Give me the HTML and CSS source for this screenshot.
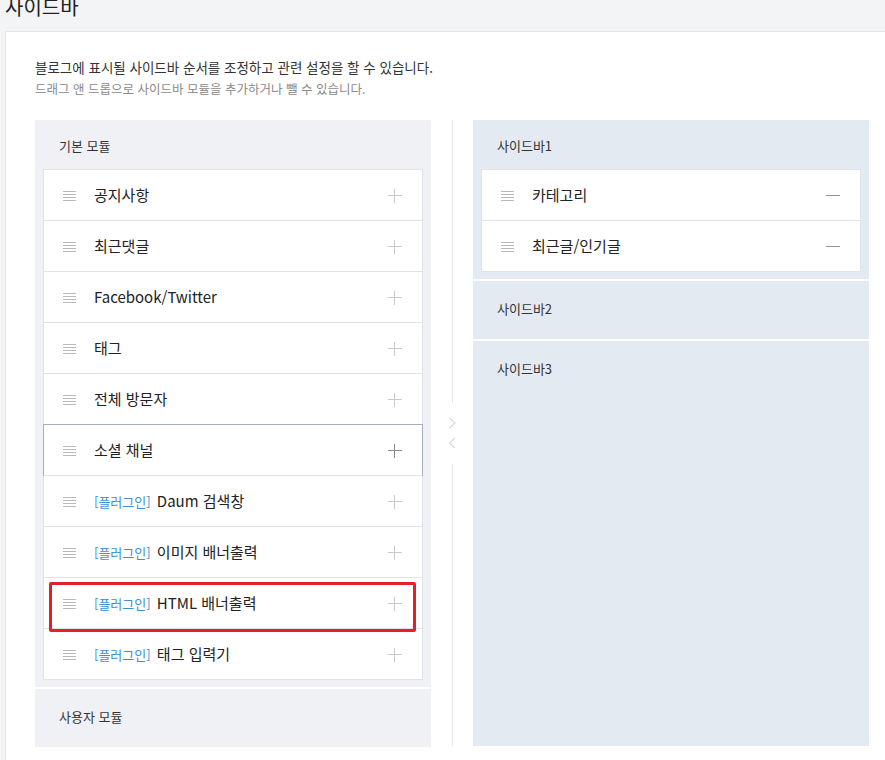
FILE: index.html
```html
<!DOCTYPE html>
<html lang="ko">
<head>
<meta charset="utf-8">
<title>사이드바</title>
<link rel="stylesheet" href="styles.css">
</head>
<body>
<h1 class="page-title">사이드바</h1>
<div class="card">
  <p class="desc">블로그에 표시될 사이드바 순서를 조정하고 관련 설정을 할 수 있습니다.</p>
  <p class="desc-sub">드래그 앤 드롭으로 사이드바 모듈을 추가하거나 뺄 수 있습니다.</p>
  <div class="board">
    <div class="col">
      <section class="panel panel-left">
        <h2 class="panel-head">기본 모듈</h2>
        <ul class="list">
          <li class="item"><span class="drag"></span><span class="name">공지사항</span><span class="plus"></span></li>
          <li class="item"><span class="drag"></span><span class="name">최근댓글</span><span class="plus"></span></li>
          <li class="item"><span class="drag"></span><span class="name">Facebook/Twitter</span><span class="plus"></span></li>
          <li class="item"><span class="drag"></span><span class="name">태그</span><span class="plus"></span></li>
          <li class="item"><span class="drag"></span><span class="name">전체 방문자</span><span class="plus"></span></li>
          <li class="item active"><span class="drag"></span><span class="name">소셜 채널</span><span class="plus"></span></li>
          <li class="item"><span class="drag"></span><span class="name"><span class="tag">[플러그인]</span> Daum 검색창</span><span class="plus"></span></li>
          <li class="item"><span class="drag"></span><span class="name"><span class="tag">[플러그인]</span> 이미지 배너출력</span><span class="plus"></span></li>
          <li class="item marked"><span class="drag"></span><span class="name"><span class="tag">[플러그인]</span> HTML 배너출력</span><span class="plus"></span></li>
          <li class="item"><span class="drag"></span><span class="name"><span class="tag">[플러그인]</span> 태그 입력기</span><span class="plus"></span></li>
        </ul>
      </section>
      <section class="panel panel-left panel-short">
        <h2 class="panel-head">사용자 모듈</h2>
      </section>
    </div>
    <div class="divider">
      <span class="vline"></span>
      <span class="arrows">
        <svg width="9" height="32" viewBox="0 0 9 32"><path d="M1.5 1 L7 6 L1.5 11" fill="none" stroke="#d6d9de" stroke-width="1.2"/><path d="M7 21 L1.5 26 L7 31" fill="none" stroke="#d6d9de" stroke-width="1.2"/></svg>
      </span>
      <span class="vline"></span>
    </div>
    <div class="col">
      <section class="panel panel-right">
        <h2 class="panel-head">사이드바1</h2>
        <ul class="list">
          <li class="item"><span class="drag"></span><span class="name">카테고리</span><span class="minus"></span></li>
          <li class="item"><span class="drag"></span><span class="name">최근글/인기글</span><span class="minus"></span></li>
        </ul>
      </section>
      <section class="panel panel-right panel-short">
        <h2 class="panel-head">사이드바2</h2>
      </section>
      <section class="panel panel-right panel-fill">
        <h2 class="panel-head">사이드바3</h2>
      </section>
    </div>
  </div>
</div>
</body>
</html>
```
FILE: styles.css
```css
html, body {
  margin: 0;
  padding: 0;
  height: 100%;
  overflow: hidden;
}
body {
  background: #f3f4f6;
  font-family: "Noto Sans CJK KR", "Noto Sans", sans-serif;
  color: #222;
}
.page-title {
  margin: -7px 0 0 5px;
  font-size: 20px;
  font-weight: 400;
  line-height: 28px;
  height: 28px;
  color: #222;
}
.card {
  margin: 10px -20px 0 5px;
  background: #fff;
  border: 1px solid #e3e5ea;
  padding: 25px 0 0 29px;
  height: 740px;
}
.desc {
  margin: 0;
  font-size: 13.5px;
  line-height: 20px;
  color: #333;
}
.desc-sub {
  margin: 1px 0 0;
  font-size: 12.5px;
  line-height: 21px;
  color: #8a8a8a;
}
.board {
  display: flex;
  margin-top: 21px;
  align-items: stretch;
  height: 626px;
}
.col {
  width: 396px;
  display: flex;
  flex-direction: column;
  gap: 2px;
}
.divider {
  width: 42px;
  display: flex;
  flex-direction: column;
  align-items: center;
}
.vline {
  flex: 1;
  width: 1px;
  background: #eaebee;
  margin-left: 1px;
}
.arrows {
  height: 61px;
  display: flex;
  align-items: center;
  justify-content: center;
  margin-left: 1px;
}
.arrows svg {
  display: block;
}
.panel {
  padding: 0 8px 7px;
}
.panel-left { background: #eff1f5; }
.panel-right { background: #e4eaf2; }
.panel-short { height: 58px; padding: 0 8px; }
.panel-fill { flex: 1; }
.panel-head {
  margin: 0;
  padding-left: 16px;
  height: 49px;
  line-height: 52px;
  font-size: 13px;
  font-weight: 400;
  color: #333;
}
.panel-short .panel-head {
  height: 58px;
  line-height: 56px;
}
.panel-fill .panel-head {
  line-height: 56px;
  height: 58px;
}
.list {
  list-style: none;
  margin: 0;
  padding: 0;
  background: #fff;
  border: 1px solid #dfe2e8;
  border-top: 0;
}
.item {
  position: relative;
  display: flex;
  align-items: center;
  height: 50px;
  border-top: 1px solid #dfe2e8;
  padding: 0 20px 0 19px;
}
.drag {
  width: 13px;
  height: 10px;
  margin-top: 1px;
  background: repeating-linear-gradient(to bottom, #b9b9b9 0, #b9b9b9 1px, transparent 1px, transparent 3px);
  flex: none;
}
.name {
  flex: 1;
  margin-left: 18px;
  font-size: 15px;
  color: #222;
  line-height: 20px;
}
.tag {
  font-size: 13px;
  color: #3b8fd9;
  margin-right: 2px;
}
.plus {
  position: relative;
  width: 14px;
  height: 14px;
  flex: none;
  margin-top: 2px;
}
.plus::before, .plus::after {
  content: "";
  position: absolute;
  background: #c9c9c9;
}
.plus::before { left: 0; right: 0; top: 6px; height: 1px; }
.plus::after { top: 0; bottom: 0; left: 6px; width: 1px; }
.minus {
  width: 14px;
  height: 1px;
  background: #8f939a;
  flex: none;
  margin-top: 1px;
}
.active::after {
  content: "";
  position: absolute;
  left: -1px;
  right: -1px;
  top: -1px;
  bottom: -1px;
  border: 1px solid #a7adba;
  pointer-events: none;
}
.active .plus::before, .active .plus::after { background: #8a8a8a; }
.marked::before {
  content: "";
  position: absolute;
  left: 5px;
  right: 6px;
  top: 4px;
  bottom: -4px;
  border: 3px solid #e31f2a;
  border-radius: 2px;
  z-index: 1;
  pointer-events: none;
}
```
